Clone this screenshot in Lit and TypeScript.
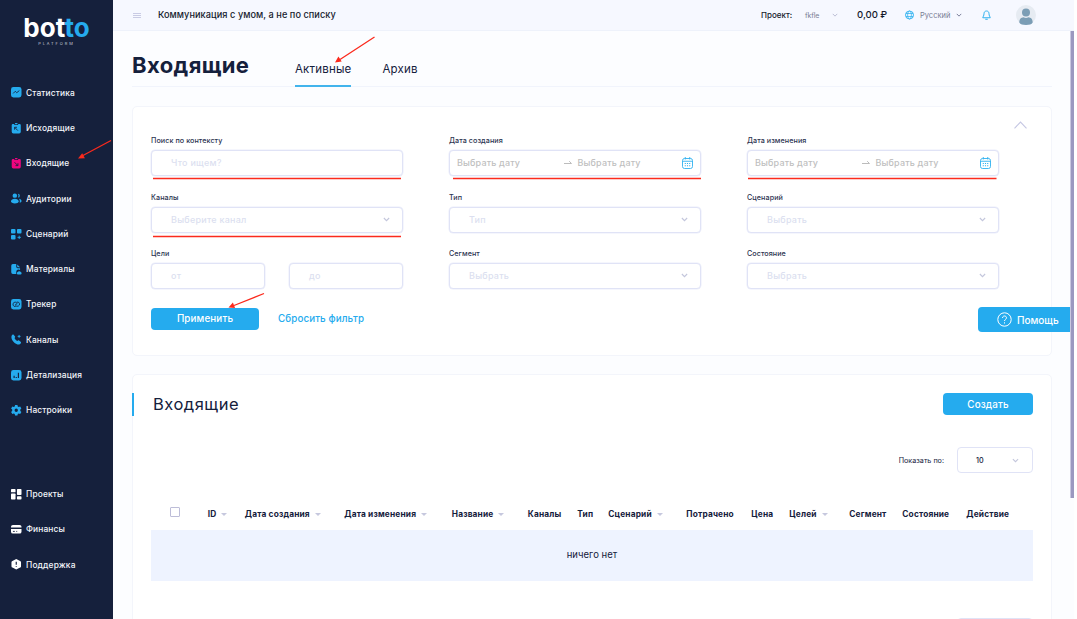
import { LitElement, html, css, svg, nothing } from 'lit';
import { customElement, state, property } from 'lit/decorators.js';
import { classMap } from 'lit/directives/class-map.js';

const icons: Record<string, unknown> = {
  stats: svg`
    <rect width="22" height="22" rx="5" />
    <path class="cut" d="M4.5 13.5 9 9l3 3 5.5-4.5" />`,
  outgoing: svg`
    <path d="M4 2h3v2h8V2h3a2.500 2.500 0 0 1 2.500 2.500v14A3.500 3.500 0 0 1 17 22H5a3.500 3.500 0 0 1-3.500-3.500v-14A2.500 2.500 0 0 1 4 2zM8.500 0h5v2.600h-5z" />
    <path class="cut" d="M14.500 16 8 9.500M7.500 14V9h5" />`,
  incoming: svg`
    <path d="M4 2h3v2h8V2h3a2.500 2.500 0 0 1 2.500 2.500v14A3.500 3.500 0 0 1 17 22H5a3.500 3.500 0 0 1-3.500-3.500v-14A2.500 2.500 0 0 1 4 2zM8.500 0h5v2.600h-5z" />
    <path class="cut" d="M7.500 9 14 15.500M14.500 11v5h-5" />`,
  audience: svg`
    <circle cx="8" cy="5.500" r="4.700" />
    <path d="M0 17.500C0 14 3.500 12 8 12s8 2 8 5.500S12.500 22 8 22s-8-1.500-8-4.500z" />
    <path d="M14.500 1.500a4 4 0 0 1 0 8 7 7 0 0 0 0-8zM16.500 12c3.300.3 5.500 2 5.500 4.500 0 2-1.600 3.200-4 3.500 1-3 .5-6-1.500-8z" />`,
  scenario: svg`
    <rect width="9.500" height="9.500" rx="2" />
    <rect x="12.500" width="9.500" height="9.500" rx="2" />
    <rect y="12.500" width="9.500" height="9.500" rx="2" />
    <path class="line" d="M17.200 14v7M13.700 17.500h7" />`,
  materials: svg`
    <path d="M4 0h7v6a3 3 0 0 0 3 3h5v3.500a5 5 0 0 0-8 4.500v4H4a3.500 3.500 0 0 1-3.500-3.500v-14A3.500 3.500 0 0 1 4 0zM13 1l6 6h-4.500A1.500 1.500 0 0 1 13 5.500z" />
    <path d="M14.500 22a2.600 2.600 0 0 1-.5-5 3.600 3.600 0 0 1 6.500 0 2.600 2.600 0 0 1-.5 5z" />`,
  tracker: svg`
    <rect width="22" height="22" rx="5" />
    <path class="cut" d="M10 15.500a4.500 4.500 0 1 1 2.500-6.500M12 6.500a4.500 4.500 0 1 1-2.500 6.500M8.500 13l5-4" />`,
  channels: svg`
    <path d="M1 4.500C2 2 4 .5 5.500 1.500l3 3.500c.8 1-.8 2.800-1.200 3.500.8 2.300 3.500 5 6 6.200.8-.5 2.500-2 3.500-1.200l4 3c1 1.500-1 4.500-3.500 5.500C9 22.500-.5 12.500 1 4.500z" />
    <path class="line" d="M17 2v6M14 5h6" />`,
  detail: svg`
    <rect width="22" height="22" rx="5" />
    <path class="cut wide" d="M6.500 17v-5M11 17v-2.500M15.500 17V6" />`,
  settings: svg`
    <path fill-rule="evenodd" d="M8.500 0h5l.7 3 2 1 3-1 2.600 4.500-2.300 2v3l2.300 2L19.200 19l-3-1-2 1-.7 3h-5l-.7-3-2-1-3 1L.2 14.500l2.300-2v-3l-2.300-2L2.800 3l3 1 2-1zM11 7.500a3.500 3.500 0 1 0 0 7 3.500 3.500 0 0 0 0-7z" />`,
  projects: svg`
    <rect width="9.500" height="7" rx="1.500" />
    <rect y="9.500" width="9.500" height="12.500" rx="1.500" />
    <rect x="12.500" width="9.500" height="12.500" rx="1.500" />
    <rect x="12.500" y="15" width="9.500" height="7" rx="1.500" />`,
  finance: svg`
    <path d="M4 2h14a4 4 0 0 1 4 4v1.500H0V6a4 4 0 0 1 4-4zM0 10.500h22V16a4 4 0 0 1-4 4H4a4 4 0 0 1-4-4z" />
    <path class="cut" d="M4 15.500h4M11 15.500h2" />`,
  support: svg`
    <path d="M11 0 19 4a3 3 0 0 1 2 3v8a3 3 0 0 1-2 3l-8 4-8-4a3 3 0 0 1-2-3V7a3 3 0 0 1 2-3z" />
    <path class="cut wide" d="M11 5.500v6.500M11 15v2" />`,
};

interface NavItem {
  icon: string;
  label: string;
  active?: boolean;
}

const mainNav: NavItem[] = [
  { icon: 'stats', label: 'Статистика' },
  { icon: 'outgoing', label: 'Исходящие' },
  { icon: 'incoming', label: 'Входящие', active: true },
  { icon: 'audience', label: 'Аудитории' },
  { icon: 'scenario', label: 'Сценарий' },
  { icon: 'materials', label: 'Материалы' },
  { icon: 'tracker', label: 'Трекер' },
  { icon: 'channels', label: 'Каналы' },
  { icon: 'detail', label: 'Детализация' },
  { icon: 'settings', label: 'Настройки' },
];

const bottomNav: NavItem[] = [
  { icon: 'projects', label: 'Проекты' },
  { icon: 'finance', label: 'Финансы' },
  { icon: 'support', label: 'Поддержка' },
];

const columns = [
  { label: 'ID', sortable: true },
  { label: 'Дата создания', sortable: true },
  { label: 'Дата изменения', sortable: true },
  { label: 'Название', sortable: true },
  { label: 'Каналы' },
  { label: 'Тип' },
  { label: 'Сценарий', sortable: true },
  { label: 'Потрачено' },
  { label: 'Цена' },
  { label: 'Целей', sortable: true },
  { label: 'Сегмент' },
  { label: 'Состояние' },
  { label: 'Действие' },
];

const chevron = html`
  <svg class="chevron" viewBox="0 0 8 5">
    <path d="M1 .8 4 3.800 7 .8" />
  </svg>
`;

@customElement('side-bar')
export class SideBar extends LitElement {
  static styles = css`
    :host {
      display: flex;
      flex-direction: column;
      width: 113px;
      flex: none;
      background: #15203c;
      color: #f4f6fb;
      box-sizing: border-box;
      padding-top: 13px;
    }

    .logo {
      display: flex;
      flex-direction: column;
      align-items: center;
      height: 62px;
    }

    .name {
      font-size: 26px;
      line-height: 29px;
      font-weight: 700;
      letter-spacing: 0.1px;
      color: #fff;
    }

    .name span {
      color: #25abee;
    }

    .sub {
      font-size: 4px;
      line-height: 4px;
      letter-spacing: 1.9px;
      color: #c3c8d6;
    }

    nav {
      display: flex;
      flex-direction: column;
    }

    .bottom {
      margin-top: 48.300px;
    }

    .item {
      display: flex;
      align-items: center;
      gap: 4.500px;
      height: 35.300px;
      padding-left: 11px;
      font-size: 8.400px;
      font-weight: 500;
      letter-spacing: 0.14px;
    }

    svg {
      width: 10.500px;
      height: 10.500px;
      fill: #25abee;
      overflow: visible;
    }

    .active svg {
      fill: #f0047f;
    }

    .bottom svg {
      fill: #fff;
    }

    .cut {
      fill: none;
      stroke: #15203c;
      stroke-width: 1.8;
    }

    .wide {
      stroke-width: 2.4;
    }

    .line {
      fill: none;
      stroke: #25abee;
      stroke-width: 2;
    }
  `;

  private renderItem(item: NavItem) {
    return html`
      <div class=${classMap({ item: true, active: !!item.active })}>
        <svg viewBox="0 0 22 22">${icons[item.icon]}</svg>
        <span>${item.label}</span>
      </div>
    `;
  }

  render() {
    return html`
      <div class="logo">
        <div class="name">bot<span>to</span></div>
        <div class="sub">PLATFORM</div>
      </div>
      <nav>${mainNav.map(item => this.renderItem(item))}</nav>
      <nav class="bottom">${bottomNav.map(item => this.renderItem(item))}</nav>
    `;
  }
}

@customElement('top-bar')
export class TopBar extends LitElement {
  static styles = css`
    :host {
      display: flex;
      align-items: center;
      height: 30px;
      flex: none;
      padding: 0 38px 0 20px;
      background: #f6f8ff;
      border-bottom: 1px solid #eef2fb;
      color: #151a2c;
      white-space: nowrap;
    }

    .burger {
      width: 8px;
      height: 6px;
      margin: 2px 17px 0 0;
      stroke: #c9cbe4;
      stroke-width: 1.2;
    }

    .slogan {
      margin-top: -1px;
      font-size: 9.200px;
      font-weight: 500;
      letter-spacing: 0.05px;
    }

    .right {
      display: grid;
      grid-template-columns: 44px 27px 25px 48px 15px 36px 26px 34px 20px;
      align-items: center;
      margin-left: auto;
      font-size: 8px;
      font-weight: 500;
    }

    .muted {
      color: #797d94;
      font-size: 7.500px;
      font-weight: 400;
    }

    .project {
      font-size: 7px;
      letter-spacing: -0.1px;
    }

    .money {
      margin-top: -1px;
      font-size: 9.600px;
      letter-spacing: -0.05px;
    }

    .chevron {
      width: 6px;
      height: 4px;
      fill: none;
      stroke: #6d7290;
      stroke-width: 1.2;
    }

    .pale {
      stroke: #b5b8d0;
    }

    .globe,
    .bell {
      width: 9px;
      height: 10px;
      fill: none;
      stroke: #2fb1ef;
    }

    .avatar {
      width: 20px;
      height: 20px;
    }
  `;

  render() {
    return html`
      <svg class="burger" viewBox="0 0 8 6">
        <path d="M0 .5h8M0 2.500h8M0 4.500h8" />
      </svg>
      <span class="slogan">Коммуникация с умом, а не по списку</span>
      <div class="right">
        <span>Проект:</span>
        <span class="muted project">fkfle</span>
        <svg class="chevron pale" viewBox="0 0 8 5"><path d="M1 1 4 4 7 1" /></svg>
        <span class="money">0,00 ₽</span>
        <svg class="globe" viewBox="0 0 18 20">
          <circle cx="9" cy="10" r="8" stroke-width="1.800" />
          <ellipse cx="9" cy="10" rx="3.800" ry="8" stroke-width="1.500" />
          <path d="M1.500 7h15M1.500 13h15" stroke-width="1.500" />
        </svg>
        <span class="muted">Русский</span>
        <svg class="chevron" viewBox="0 0 8 5"><path d="M1 1 4 4 7 1" /></svg>
        <svg class="bell" viewBox="0 0 18 20">
          <path
            stroke-width="2"
            d="M9 2C5.500 2 4 4.500 4 7.500c0 4-2 5.500-2.500 8h15C16 13 14 11.500 14 7.500 14 4.500 12.500 2 9 2zM6.500 18.500h5"
          />
        </svg>
        <svg class="avatar" viewBox="0 0 20 20">
          <circle cx="10" cy="10" r="10" fill="#e6ebf2" />
          <circle cx="10" cy="7.500" r="4" fill="#7b9db5" />
          <path
            d="M3.300 17.500c0-3.500 2-5 4.200-5.200 1.600.9 3.400.9 5 0 2.200.2 4.200 1.700 4.200 5.200-1 1.800-3.500 2.500-6.700 2.500s-5.700-.7-6.700-2.500z"
            fill="#7b9db5"
          />
        </svg>
      </div>
    `;
  }
}

@customElement('filter-field')
export class FilterField extends LitElement {
  static styles = css`
    :host {
      display: block;
    }

    .label {
      height: 10px;
      line-height: 10px;
      margin-bottom: 4px;
      font-size: 7.200px;
      font-weight: 500;
      letter-spacing: 0.06px;
      color: #2b3350;
    }

    .row {
      display: flex;
      gap: 24px;
    }

    .box {
      display: flex;
      align-items: center;
      flex: 1;
      box-sizing: border-box;
      height: 26px;
      padding: 0 12px 1px 19px;
      border: 1px solid #e0e3f6;
      box-shadow: 0 0 0 0.5px #eceefb;
      border-radius: 4px;
      background: #fff;
      font-size: 9px;
      font-weight: 500;
      letter-spacing: 0.25px;
      color: #dcdff0;
    }

    .box span {
      flex: 1;
    }

    .date {
      padding: 0 7px 1px 7px;
      color: #bfbfbf;
      letter-spacing: 0.15px;
    }

    .arrow {
      width: 8px;
      height: 5px;
      margin: 0 6px 0 2px;
      fill: none;
      stroke: #b4b4b4;
      stroke-width: 0.9;
    }

    .chevron {
      width: 7px;
      height: 5px;
      fill: none;
      stroke: #c3c6dc;
      stroke-width: 1.3;
    }

    .calendar {
      width: 11px;
      height: 12px;
      fill: none;
      stroke: #2fb1ef;
    }
  `;

  @property()
  label = '';

  @property()
  kind: 'text' | 'select' | 'date' | 'range' = 'select';

  @property()
  placeholder = 'Выбрать';

  private renderControl() {
    switch (this.kind) {
      case 'date':
        return html`
          <div class="box date">
            <span>Выбрать дату</span>
            <svg class="arrow" viewBox="0 0 8 5">
              <path d="M0 3.500h7.500L5.200 1.200" />
            </svg>
            <span>Выбрать дату</span>
            <svg class="calendar" viewBox="0 0 22 24">
              <rect x="1" y="3" width="20" height="20" rx="4" stroke-width="1.800" />
              <path d="M1 8.500h20M6.500 0v5M15.500 0v5" stroke-width="1.800" />
              <path
                d="M5.500 13h11M5.500 17.500h11"
                stroke-width="2"
                stroke-dasharray="2.200 2.200"
              />
            </svg>
          </div>
        `;
      case 'range':
        return html`
          <div class="box"><span>от</span></div>
          <div class="box"><span>до</span></div>
        `;
      default:
        return html`
          <div class="box">
            <span>${this.placeholder}</span>
            ${this.kind === 'select' ? chevron : nothing}
          </div>
        `;
    }
  }

  render() {
    return html`
      <div class="label">${this.label}</div>
      <div class="row">${this.renderControl()}</div>
    `;
  }
}

@customElement('app-root')
export class AppRoot extends LitElement {
  static styles = css`
    :host {
      display: flex;
      position: relative;
      height: 619px;
      overflow: hidden;
      background: #fff;
      color: #15203c;
      font-family: Inter, 'Open Sans', sans-serif;
    }

    .page {
      display: flex;
      flex-direction: column;
      width: 961px;
      background: #fcfdff;
    }

    .content {
      display: flex;
      flex-direction: column;
      width: 920px;
      padding-left: 19px;
    }

    .heading {
      display: flex;
      height: 55px;
      border-bottom: 1px solid #f1f4fc;
    }

    h1 {
      width: 163px;
      margin: 0;
      padding-top: 20px;
      font-size: 22px;
      line-height: 29px;
      font-weight: 700;
      letter-spacing: 0.4px;
    }

    .tab {
      height: 33px;
      padding-top: 21px;
      margin-right: 31px;
      border-bottom: 2px solid transparent;
      font-size: 11.500px;
      line-height: 34px;
      letter-spacing: 0.18px;
    }

    .selected {
      border-color: #42b4ec;
    }

    .card {
      box-sizing: border-box;
      border: 1px solid #f3f5fb;
      border-radius: 5px;
      background: #fff;
    }

    .filters {
      height: 250px;
      margin-top: 19px;
      padding: 14px 18px 0;
    }

    .collapse {
      display: block;
      width: 13px;
      height: 8px;
      margin: 0 6px 7px auto;
      fill: none;
      stroke: #c5c7e3;
      stroke-width: 1.1;
    }

    .fields {
      display: grid;
      grid-template-columns: repeat(3, 252px);
      column-gap: 46px;
      row-gap: 16.700px;
    }

    .actions {
      display: flex;
      align-items: center;
      gap: 19px;
      margin-top: 18.400px;
      font-size: 9.800px;
      font-weight: 500;
      letter-spacing: 0.1px;
      color: #25abee;
    }

    .button {
      display: flex;
      align-items: center;
      justify-content: center;
      width: 108px;
      height: 22px;
      border-radius: 4px;
      background: #25abee;
      color: #fff;
      font-size: 9.800px;
      font-weight: 500;
      letter-spacing: 0.15px;
    }

    .create {
      width: 90px;
      margin-bottom: 1px;
    }

    .list {
      height: 300px;
      margin-top: 18px;
      padding: 18px 18px 0 0;
    }

    .list-head {
      display: flex;
      align-items: center;
      justify-content: space-between;
      height: 23px;
    }

    h2 {
      margin: 0 0 0 -1px;
      padding-left: 19px;
      border-left: 2px solid #25abee;
      font-size: 16.500px;
      line-height: 23px;
      font-weight: 400;
      letter-spacing: 0.5px;
    }

    .paging {
      display: flex;
      align-items: center;
      justify-content: flex-end;
      gap: 13px;
      margin-top: 31px;
      font-size: 7.200px;
    }

    .size {
      display: flex;
      align-items: center;
      justify-content: space-between;
      box-sizing: border-box;
      width: 76px;
      height: 26px;
      padding: 0 13px 0 18px;
      border: 1px solid #e0e3f6;
      border-radius: 4px;
      font-weight: 500;
    }

    .chevron {
      width: 7px;
      height: 5px;
      fill: none;
      stroke: #c3c6dc;
      stroke-width: 1.2;
    }

    .table-head {
      display: grid;
      grid-template-columns: 37.800px 37px 99.500px 107.500px 76px 49.500px 31px 78px 65px 38px 60px 53px 64px 1fr;
      align-items: center;
      height: 20px;
      margin: 31px 0 6px;
      padding-left: 37px;
      font-size: 8.300px;
      font-weight: 700;
      letter-spacing: 0.18px;
      white-space: nowrap;
    }

    .check {
      width: 8px;
      height: 8px;
      margin-bottom: 4px;
      border: 1px solid #bdbdd8;
      border-radius: 1px;
    }

    .sort {
      display: inline-block;
      margin: 0 0 1px 5px;
      border: 3px solid transparent;
      border-top: 3.500px solid #c6c8de;
      border-bottom: 0;
    }

    .empty {
      height: 51px;
      margin-left: 18px;
      background: #eef3ff;
      font-size: 9.500px;
      line-height: 50px;
      letter-spacing: 0.05px;
      text-align: center;
    }

    .footer {
      margin-top: 37px;
    }

    .help {
      position: absolute;
      top: 307px;
      right: 6px;
      display: flex;
      align-items: center;
      gap: 5px;
      box-sizing: border-box;
      width: 93px;
      height: 25px;
      padding-left: 19px;
      border-radius: 4px 0 0 4px;
      background: #25abee;
      color: #fff;
      font-size: 10px;
      font-weight: 500;
    }

    .help svg {
      width: 15px;
      height: 15px;
      fill: none;
      stroke: #fff;
      stroke-width: 1;
    }

    .scrollbar {
      position: absolute;
      top: 31px;
      right: 3px;
      width: 3px;
      height: 467px;
      background: #9b98c0;
      border-left: 1px solid #c9c8e0;
    }

    .marks {
      position: absolute;
      inset: 0;
      pointer-events: none;
      fill: #fb2a1d;
      stroke: #fb2a1d;
      stroke-width: 1.3;
    }

    .underline {
      stroke-width: 1.7;
    }

    .head {
      stroke: none;
    }
  `;

  @state()
  private tab = 'Активные';

  private renderTab(name: string) {
    return html`
      <div
        class=${classMap({ tab: true, selected: this.tab === name })}
        @click=${() => (this.tab = name)}
      >
        ${name}
      </div>
    `;
  }

  private renderFilters() {
    return html`
      <section class="card filters">
        <svg class="collapse" viewBox="0 0 13 8">
          <path d="M.5 7.300 6.500 1l6 6.300" />
        </svg>
        <div class="fields">
          <filter-field
            label="Поиск по контексту"
            kind="text"
            placeholder="Что ищем?"
          ></filter-field>
          <filter-field label="Дата создания" kind="date"></filter-field>
          <filter-field label="Дата изменения" kind="date"></filter-field>
          <filter-field label="Каналы" placeholder="Выберите канал"></filter-field>
          <filter-field label="Тип" placeholder="Тип"></filter-field>
          <filter-field label="Сценарий"></filter-field>
          <filter-field label="Цели" kind="range"></filter-field>
          <filter-field label="Сегмент"></filter-field>
          <filter-field label="Состояние"></filter-field>
        </div>
        <div class="actions">
          <div class="button">Применить</div>
          <span>Сбросить фильтр</span>
        </div>
      </section>
    `;
  }

  private renderList() {
    return html`
      <section class="card list">
        <div class="list-head">
          <h2>Входящие</h2>
          <div class="button create">Создать</div>
        </div>
        <div class="paging">
          <span>Показать по:</span>
          <div class="size"><span>10</span>${chevron}</div>
        </div>
        <div class="table-head">
          <span class="check"></span>
          ${columns.map(
            column => html`
              <span
                >${column.label}${column.sortable
                  ? html`<i class="sort"></i>`
                  : nothing}</span
              >
            `
          )}
        </div>
        <div class="empty">ничего нет</div>
        <div class="paging footer"><div class="size"></div></div>
      </section>
    `;
  }

  render() {
    return html`
      <side-bar></side-bar>
      <main class="page">
        <top-bar></top-bar>
        <div class="content">
          <div class="heading">
            <h1>Входящие</h1>
            ${this.renderTab('Активные')} ${this.renderTab('Архив')}
          </div>
          ${this.renderFilters()} ${this.renderList()}
        </div>
      </main>

      <div class="help">
        <svg viewBox="0 0 15 15">
          <circle cx="7.500" cy="7.500" r="6.700" />
          <path d="M5.500 6c0-2.700 4-2.600 4-.2 0 1.600-2 1.500-2 3.200M7.500 10.300v1.200" />
        </svg>
        Помощь
      </div>
      <div class="scrollbar"></div>

      <svg class="marks" width="1077" height="619" viewBox="0 0 1077 619">
        <path d="M111 140.500 82 156M374.500 37 340 59.500M264 293.500 234 305.500" />
        <path
          class="head"
          d="M78 158.500l4.200-5.300 2.700 5zM335 62.500l3.400-6 3.300 5zM228.500 307.500l4.400-5 2.200 5.500z"
        />
        <path
          class="underline"
          d="M153 178.500h248M453 178.500h248M748 178.500h248.500M153 236.500h248"
        />
      </svg>
    `;
  }
}

declare global {
  interface HTMLElementTagNameMap {
    'app-root': AppRoot;
    'side-bar': SideBar;
    'top-bar': TopBar;
    'filter-field': FilterField;
  }
}
